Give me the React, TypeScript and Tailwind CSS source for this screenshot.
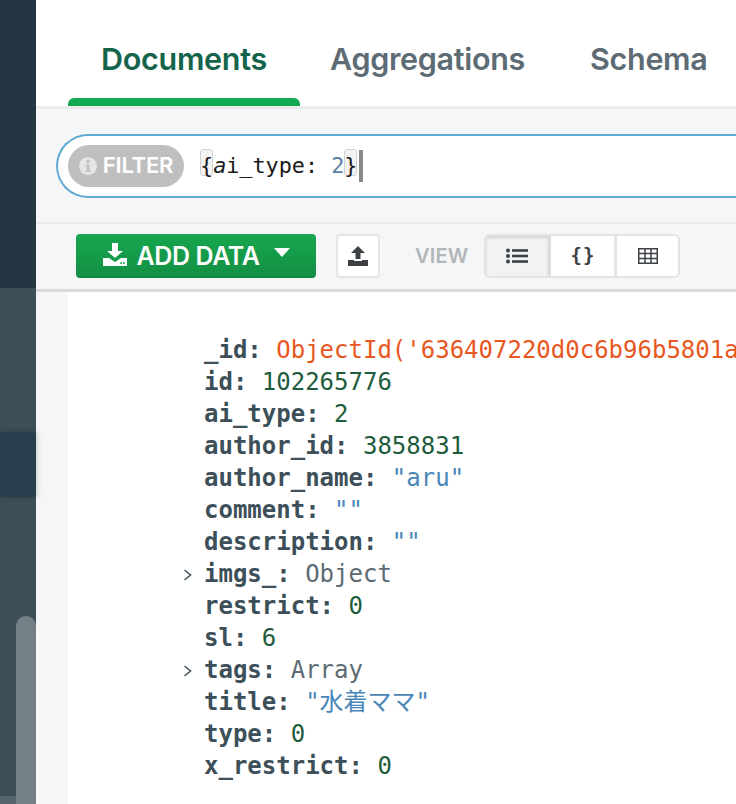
import React from "react";

const mono = "font-['DejaVu_Sans_Mono','Noto_Sans_CJK_JP',monospace]";

function K({ children }: { children: React.ReactNode }) {
  return <span className="font-bold text-[#3d4f58]">{children}</span>;
}

function Row({ k, v, c, arrow }: { k: string; v: string; c: string; arrow?: boolean }) {
  return (
    <div className="relative h-8 whitespace-nowrap leading-8">
      {arrow && (
        <svg className="absolute left-[-22px] top-[10px]" width="12" height="14" viewBox="0 0 12 14" fill="none">
          <path d="M2.5 2 L8.5 7 L2.5 12" stroke="#3d4f58" strokeWidth="1.5" />
        </svg>
      )}
      <K>{k}:</K> <span className={c}>{v}</span>
    </div>
  );
}

export default function App() {
  const num = "text-[#1f5c3d]";
  const str = "text-[#4a86b8]";
  const obj = "text-[#5c6b73]";
  return (
    <div className="relative flex h-[804px] w-[736px] overflow-hidden bg-white font-['Inter',sans-serif]">
      <aside className="relative flex w-9 shrink-0 flex-col bg-[#3d4f58]">
        <div className="h-[288px] bg-[#243642]" />
        <div className="h-[144px]" />
        <div className="h-[65px] bg-[#2a3f4e] shadow-[0_0_6px_rgba(0,0,0,0.25)]" />
        <div className="mt-auto h-2 bg-[#56656d]" />
        <div className="absolute bottom-0 left-4 top-[616px] w-5 rounded-t-[10px] bg-[#747f86]" />
      </aside>

      <main className="flex min-w-0 flex-1 flex-col">
        <nav className="flex h-[106px] items-start bg-white pl-8 text-[30.5px] font-semibold tracking-[-0.3px]">
          <div className="relative h-[106px] w-[232px] pt-[39px] text-center leading-10 text-[#13644a]">
            Documents
            <div className="absolute bottom-0 left-0 h-2 w-full rounded-t-md bg-[#13aa52]" />
          </div>
          <div className="w-[255px] pt-[39px] text-center leading-10 text-[#5d6c74]">Aggregations</div>
          <div className="pl-[35px] pt-[39px] leading-10 text-[#5d6c74]">Schema</div>
        </nav>

        <section className="flex h-[118px] items-center border-t-[3px] border-b-2 border-[#ebeded] bg-[#f5f6f7] pl-5">
          <div className="flex h-[64px] flex-1 items-center rounded-l-[32px] border-y-2 border-l-2 border-[#5fa9d3] bg-white pl-[10px]">
            <div className="flex h-[42px] w-[116px] items-center justify-center gap-[6px] rounded-full bg-[#bfbfbf] text-[22px] font-semibold tracking-[-0.2px] text-white">
              <svg width="18" height="18" viewBox="0 0 18 18">
                <circle cx="9" cy="9" r="9" fill="#e6e6e6" />
                <rect x="7.6" y="3" width="3" height="3" fill="#bfbfbf" />
                <path d="M6.5 7.5h4v6h1.2v1.5H6.5v-1.5h1.2V9H6.5z" fill="#bfbfbf" />
              </svg>
              <span>FILTER</span>
            </div>
            <div className={`${mono} relative ml-[16px] flex h-8 items-center whitespace-pre pt-[1px] text-[21.8px] text-[#1a1a1a]`}>
              <span className="relative">
                <span className="absolute left-0 top-[-1px] h-[27px] w-[13px] rounded-[3px] border border-[#d0d0d0] bg-[#f4f4f4]" />
                <span className="relative">{"{"}</span>
              </span>
              <span className="italic">a</span>
              <span>i_type: </span>
              <span className="text-[#5c7fa6]">2</span>
              <span className="relative">
                <span className="absolute left-0 top-[-1px] h-[27px] w-[13px] rounded-[3px] border border-[#d0d0d0] bg-[#f4f4f4]" />
                <span className="relative">{"}"}</span>
              </span>
              <span className="ml-[2px] h-8 w-[4px] bg-[#888]" />
            </div>
          </div>
        </section>

        <section className="flex h-[68px] items-center gap-[20px] border-b-[3px] border-[#d9d9d9] bg-[#f5f6f7] pb-[2px] pl-10 shadow-[0_1px_3px_rgba(0,0,0,0.08)]">
          <button className="flex h-[44px] w-[240px] items-center justify-center rounded-[4px] border-b-2 border-[#0f8a43] bg-gradient-to-b from-[#17a64f] to-[#139044] text-[25px] font-semibold tracking-[-0.4px] text-white">
            <svg className="mr-[9px]" width="26" height="26" viewBox="0 0 26 26" fill="white">
              <path d="M10 1h6v8h5l-8 7-8-7h5z" />
              <path d="M1 16h6l6 4 6-4h6v8H1z" />
              <circle cx="19" cy="21" r="1" fill="#17a64f" />
              <circle cx="22" cy="21" r="1" fill="#17a64f" />
            </svg>
            <span className="pt-[4px]">ADD DATA</span>
            <svg className="ml-[15px] mb-1" width="16" height="9" viewBox="0 0 16 9" fill="white"><path d="M0 0h16L8 9z" /></svg>
          </button>
          <button className="flex h-[44px] w-[44px] items-center justify-center rounded-[4px] border-2 border-[#e4e5e6] bg-white">
            <svg width="22" height="22" viewBox="0 0 22 22" fill="#3d4146">
              <path d="M11 1l7 7h-4.500v6h-5V8H4z" />
              <path d="M1 15h6v1h8v-1h6v6H1z" />
            </svg>
          </button>
          <span className="ml-[15px] text-[20px] font-semibold tracking-[0.2px] text-[#b3b6b9]">VIEW</span>
          <div className="-ml-[4px] flex h-[44px] overflow-hidden rounded-[6px] border-2 border-[#e2e3e4]">
            <div className="flex w-[65px] items-center justify-center border-r-[3px] border-[#dcdddf] bg-[#f1f2f3] shadow-[inset_0_2px_3px_rgba(0,0,0,0.12)]">
              <svg width="22" height="16" viewBox="0 0 22 16" fill="#3d4146">
                <circle cx="2" cy="2.500" r="2" /><circle cx="2" cy="8" r="2" /><circle cx="2" cy="13.500" r="2" />
                <rect x="6" y="1.200" width="16" height="2.600" /><rect x="6" y="6.700" width="16" height="2.600" /><rect x="6" y="12.200" width="16" height="2.600" />
              </svg>
            </div>
            <div className="flex w-[66px] items-center justify-center border-r-[3px] border-[#e4e5e6] bg-white">
              <span className={`${mono} text-[19px] font-bold leading-none tracking-[1px] text-[#3d4146]`}>{"{}"}</span>
            </div>
            <div className="flex w-[61px] items-center justify-center bg-white">
              <svg width="20" height="16" viewBox="0 0 20 16" fill="none" stroke="#3d4146" strokeWidth="1.500">
                <rect x="0.750" y="0.750" width="18.500" height="14.500" />
                <path d="M1 5.500h18M1 10.500h18M7 1v14M13 1v14" />
              </svg>
            </div>
          </div>
        </section>

        <section className="flex min-h-0 flex-1 bg-[#f5f6f7] pl-8">
          <div className={`${mono} min-w-0 flex-1 overflow-hidden bg-white pl-[136px] pt-[42px] text-[24px]`}>
            <Row k="_id" v="ObjectId('636407220d0c6b96b5801a" c="text-[#e8571f]" />
            <Row k="id" v="102265776" c={num} />
            <Row k="ai_type" v="2" c={num} />
            <Row k="author_id" v="3858831" c={num} />
            <Row k="author_name" v={'"aru"'} c={str} />
            <Row k="comment" v={'""'} c={str} />
            <Row k="description" v={'""'} c={str} />
            <Row k="imgs_" v="Object" c={obj} arrow />
            <Row k="restrict" v="0" c={num} />
            <Row k="sl" v="6" c={num} />
            <Row k="tags" v="Array" c={obj} arrow />
            <Row k="title" v={'"水着ママ"'} c={str} />
            <Row k="type" v="0" c={num} />
            <Row k="x_restrict" v="0" c={num} />
          </div>
        </section>
      </main>
    </div>
  );
}
